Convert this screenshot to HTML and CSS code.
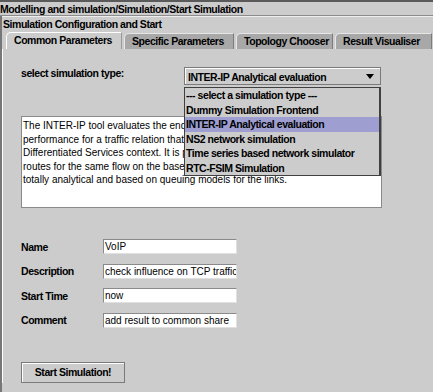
FILE: index.html
```html
<!DOCTYPE html>
<html lang="en">
<head>
    <meta charset="UTF-8">
    <title>Start Simulation</title>
    <link rel="stylesheet" href="styles.css">
</head>
<body>
    <div class="crumb">Modelling and simulation/Simulation/Start Simulation</div>

    <div class="frame">
        <div class="subtitle">Simulation Configuration and Start</div>

        <div class="tabs">
            <div class="tab active">Common Parameters</div>
            <div class="tab">Specific Parameters</div>
            <div class="tab">Topology Chooser</div>
            <div class="tab">Result Visualiser</div>
        </div>

        <div class="panel">
            <div class="type-row">
                <span class="label">select simulation type:</span>
                <div class="combo-wrap">
                    <div class="combo">
                        <span>INTER-IP Analytical evaluation</span>
                        <span class="arrow"></span>
                    </div>
                    <ul class="popup">
                        <li>--- select a simulation type ---</li>
                        <li>Dummy Simulation Frontend</li>
                        <li class="selected">INTER-IP Analytical evaluation</li>
                        <li>NS2 network simulation</li>
                        <li>Time series based network simulator</li>
                        <li>RTC-FSIM Simulation</li>
                    </ul>
                </div>
            </div>

            <div class="info">
                <p>The INTER-IP tool evaluates the end-to-end quality of service</p>
                <p>performance for a traffic relation  that is routed in a</p>
                <p>Differentiated Services context. It is possible to compare different</p>
                <p>routes for the same flow on the base of the results. The tool is</p>
                <p>totally analytical and based on queuing models for the links.</p>
            </div>

            <div class="fields">
                <span class="label">Name</span>
                <div class="field">VoIP</div>
                <span class="label">Description</span>
                <div class="field">check influence on TCP traffic</div>
                <span class="label">Start Time</span>
                <div class="field">now</div>
                <span class="label">Comment</span>
                <div class="field">add result to common share</div>
            </div>

            <button class="start">Start Simulation!</button>
        </div>
    </div>
</body>
</html>
```

FILE: styles.css
```css
* {
    margin: 0;
    padding: 0;
    box-sizing: border-box;
}

body {
    background-color: #cccccc;
    color: #000000;
    font-family: 'Liberation Sans', Arial, sans-serif;
    font-size: 10.5px;
    font-weight: bold;
    letter-spacing: -0.45px;
    border-top: 2px solid #5a5a5a;
    width: 433px;
    height: 392px;
    overflow: hidden;
}

.crumb {
    height: 14px;
    line-height: 15px;
    white-space: nowrap;
    border-bottom: 1px solid #8c8c8c;
}

.frame {
    border-left: 2px solid #777777;
    height: 376px;
}

.subtitle {
    height: 15px;
    line-height: 15px;
    padding-left: 1px;
    border-top: 1px solid #eeeeee;
}

.tabs {
    display: flex;
    gap: 2px;
    margin-top: 1px;
    padding-left: 4px;
    height: 17px;
}

.tab {
    height: 16px;
    line-height: 15px;
    margin-top: 1px;
    padding: 0 0 0 7px;
    background-color: #a8a8a8;
    border-top: 1px solid #e6e6e6;
    border-left: 1px solid #e6e6e6;
    border-right: 1px solid #7c7c7c;
    border-top-left-radius: 5px;
    white-space: nowrap;
}

.tab:nth-child(2) { width: 110px; }
.tab:nth-child(3) { width: 97px; }
.tab:nth-child(4) { width: 97px; }

.tab.active {
    width: 116px;
    height: 17px;
    margin-top: 0;
    background-color: #cccccc;
    border-top-color: #ffffff;
    border-left-color: #ffffff;
    border-right-color: #999999;
}

.panel {
    border-left: 1px solid #ffffff;
    padding: 18px 0 0 18px;
}

.type-row {
    display: flex;
    height: 18px;
}

.type-row .label {
    width: 163px;
    line-height: 13px;
}

.combo-wrap {
    position: relative;
    width: 197px;
}

.combo {
    height: 18px;
    display: flex;
    align-items: center;
    justify-content: space-between;
    padding: 2px 6px 0 3px;
    border: 1px solid #7a7a7a;
    box-shadow: inset 1px 1px 0 #ffffff;
}

.arrow {
    width: 0;
    height: 0;
    border-left: 4px solid transparent;
    border-right: 4px solid transparent;
    border-top: 5px solid #000000;
    margin-top: -2px;
}

.popup {
    position: absolute;
    top: 20px;
    left: 0;
    width: 197px;
    list-style: none;
    background-color: #cccccc;
    border: 1px solid #404040;
    border-right-width: 2px;
    z-index: 2;
}

.popup li {
    height: 14.5px;
    line-height: 15px;
    padding-left: 1px;
    white-space: nowrap;
}

.popup li.selected {
    background-color: #9e9ed0;
}

.info {
    margin-top: 31px;
    width: 361px;
    height: 92px;
    background-color: #ffffff;
    border: 1px solid #8a8a8a;
    padding: 2px 0 0 1px;
    font-size: 10px;
    font-weight: normal;
    letter-spacing: 0;
    line-height: 13.5px;
    white-space: nowrap;
    overflow: hidden;
}

.fields {
    display: grid;
    grid-template-columns: 82px 134px;
    grid-auto-rows: 15px;
    row-gap: 9.5px;
    align-items: center;
    margin-top: 31px;
}

.field {
    height: 15px;
    line-height: 14px;
    padding-left: 1px;
    background-color: #ffffff;
    border: 1px solid #8a8a8a;
    border-right-color: #e0e0e0;
    border-bottom-color: #e0e0e0;
    font-size: 10px;
    font-weight: normal;
    letter-spacing: 0;
    white-space: nowrap;
    overflow: hidden;
}

.start {
    display: block;
    margin-top: 34px;
    width: 104px;
    height: 21px;
    font: inherit;
    letter-spacing: inherit;
    color: #000000;
    background-color: #cccccc;
    border: 1px solid #7a7a7a;
    box-shadow: inset 1px 1px 0 #ffffff;
}
```
